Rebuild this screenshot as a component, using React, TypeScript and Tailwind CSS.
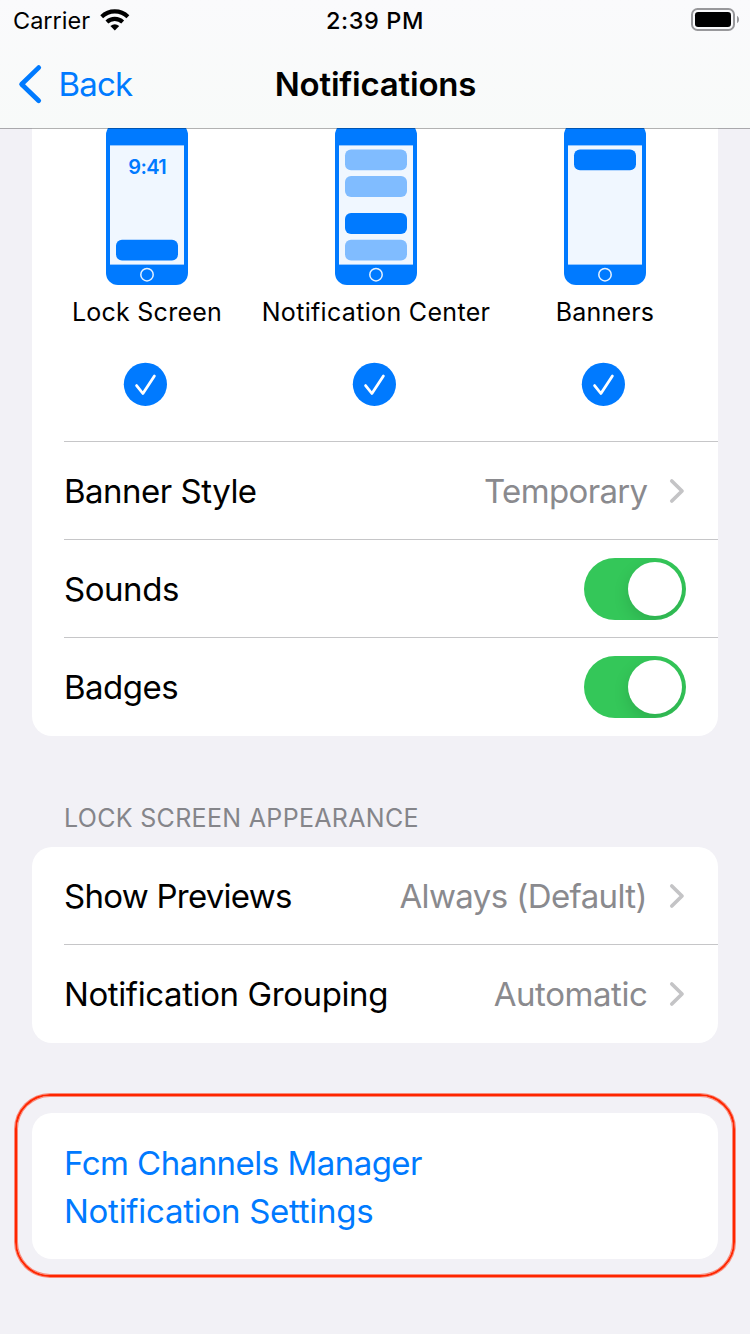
import type { ReactNode } from 'react';

type Bar = { y: number; soft?: boolean };

function WifiIcon() {
  return (
    <svg width="30" height="23" viewBox="0 0 30 23" fill="none" stroke="#000" strokeWidth="4.1">
      <path d="M1.7 8.7A18.9 18.9 0 0 1 27.9 8.7" />
      <path d="M6.9 14A11.5 11.5 0 0 1 22.7 14" />
      <path d="M10.4 18Q14.8 14.6 19.2 18L14.8 22.5Z" fill="#000" stroke="none" />
    </svg>
  );
}

function BatteryIcon() {
  return (
    <svg width="48" height="23" viewBox="0 0 48 23">
      <rect x="1" y="1" width="42" height="21" rx="5.6" fill="none" stroke="#98989b" strokeWidth="2" />
      <rect x="4" y="4" width="36" height="15" rx="3.2" fill="#000" />
      <path d="M46 7.8C47.3 8.5 48 9.9 48 11.5S47.3 14.5 46 15.2Z" fill="#98989b" />
    </svg>
  );
}

function Phone({ bars, clock }: { bars: Bar[]; clock?: boolean }) {
  return (
    <svg width="82" height="162" viewBox="0 0 82 162">
      <rect width="82" height="162" rx="12" fill="#007aff" />
      <rect x="4" y="22.4" width="74" height="119.2" fill="#f0f7ff" />
      {clock && (
        <text x="22.2" y="51.2" fill="#007aff" className="font-['Inter',sans-serif] text-[20px] font-semibold tracking-[-0.6px]">
          9:41
        </text>
      )}
      {bars.map((b) => (
        <rect key={b.y} x="10" y={b.y} width="62" height="20.8" rx="6" fill={b.soft ? '#80bcff' : '#007aff'} />
      ))}
      <circle cx="41" cy="151.7" r="6.2" fill="none" stroke="#e6f2ff" strokeWidth="1.5" />
    </svg>
  );
}

function CheckCircle() {
  return (
    <svg width="44" height="44" viewBox="-0.4 0 44 44" className="mr-[4px]">
      <circle cx="22" cy="22.3" r="21.6" fill="#007aff" />
      <path d="M13.2 23.6L19.5 31.5L31 14.1" fill="none" stroke="#fff" strokeWidth="2.8" strokeLinecap="round" strokeLinejoin="round" />
    </svg>
  );
}

function AlertOption({ label, labelClass, children }: { label: string; labelClass: string; children: ReactNode }) {
  return (
    <div className="flex flex-col items-center">
      {children}
      <span className={`mt-[11px] h-8 whitespace-nowrap text-[25px] leading-8 ${labelClass}`}>{label}</span>
      <div className="mt-[34px]">
        <CheckCircle />
      </div>
    </div>
  );
}

function Chevron() {
  return (
    <svg width="16" height="26" viewBox="0 0 16 26" fill="none" stroke="#c4c4c6" strokeWidth="3.7" strokeLinecap="round" strokeLinejoin="round" className="mr-px ml-[21.5px]">
      <path d="M2.8 3L13 13L2.8 23" />
    </svg>
  );
}

function Toggle() {
  return (
    <span className="flex h-[62px] w-[102px] justify-end overflow-hidden rounded-full bg-[#34c759] p-1">
      <span className="size-[54px] rounded-full bg-white shadow-[0_6px_16px_rgba(0,0,0,0.13)]" />
    </span>
  );
}

function Row({ label, labelClass, rowClass, children }: { label: string; labelClass: string; rowClass: string; children: ReactNode }) {
  return (
    <div className={`ml-8 flex items-center pr-8 ${rowClass}`}>
      <span className={`text-[33px] leading-[48px] ${labelClass}`}>{label}</span>
      <span className="ml-auto flex items-center">{children}</span>
    </div>
  );
}

function Value({ text, className }: { text: string; className: string }) {
  return (
    <>
      <span className={`text-[33px] leading-[48px] text-[#8a8a8e] ${className}`}>{text}</span>
      <Chevron />
    </>
  );
}

export default function App() {
  return (
    <div className="h-[1334px] w-[750px] overflow-hidden bg-[#f2f1f6] font-['Inter',sans-serif] text-black">
      <header className="relative z-10 flex h-32 flex-col bg-linear-to-b from-[#fafafc] to-[#f8faf9] shadow-[0_1px_0_rgba(0,0,0,0.3)]">
        <div className="grid h-10 grid-cols-3 items-start px-[13px]">
          <div className="flex items-start">
            <span className="pt-px text-[23.5px] leading-10">Carrier</span>
            <span className="mt-2 ml-[9.5px]">
              <WifiIcon />
            </span>
          </div>
          <span className="pt-px text-center text-[23.5px] leading-10 font-medium tracking-[0.6px]">2:39 PM</span>
          <div className="-mr-[2px] mt-2 flex justify-end">
            <BatteryIcon />
          </div>
        </div>
        <div className="grid h-[88px] grid-cols-3 items-center pl-4">
          <div className="flex items-center text-[#007aff]">
            <svg width="28" height="42" viewBox="0 0 28 42" fill="none" stroke="currentColor" strokeWidth="4.8" strokeLinecap="round" strokeLinejoin="round">
              <path d="M22.7 4.6L5.6 21.2L22.7 37.7" />
            </svg>
            <span className="ml-[14.5px] text-[33px] leading-[48px] tracking-[-0.8px]">Back</span>
          </div>
          <h1 className="-ml-[15px] text-center text-[33px] leading-[48px] font-semibold tracking-[-0.22px]">Notifications</h1>
        </div>
      </header>

      <main className="flex flex-col px-8">
        <section className="-mt-[5px] rounded-b-[20px] bg-white">
          <div className="ml-[0.5px] grid h-[318px] w-[687px] grid-cols-3">
            <AlertOption label="Lock Screen" labelClass="tracking-[0.25px]">
              <Phone clock bars={[{ y: 116.8 }]} />
            </AlertOption>
            <AlertOption label="Notification Center" labelClass="tracking-[0.32px]">
              <Phone bars={[{ y: 26.4, soft: true }, { y: 53.1, soft: true }, { y: 90.1 }, { y: 116.8, soft: true }]} />
            </AlertOption>
            <AlertOption label="Banners" labelClass="tracking-[0.2px]">
              <Phone bars={[{ y: 26.4 }]} />
            </AlertOption>
          </div>
          <Row label="Banner Style" labelClass="tracking-[-0.5px]" rowClass="h-[98px] border-t border-[#c6c6c8] pt-px">
            <Value text="Temporary" className="tracking-[-0.65px]" />
          </Row>
          <Row label="Sounds" labelClass="tracking-[-0.45px]" rowClass="h-[98px] border-t border-[#c6c6c8] pt-px">
            <Toggle />
          </Row>
          <Row label="Badges" labelClass="tracking-[-0.5px]" rowClass="h-[99px] border-t border-[#c6c6c8]">
            <Toggle />
          </Row>
        </section>

        <h2 className="mt-[66px] ml-8 h-8 text-[25px] leading-8 tracking-[0.32px] text-[#85858a]">LOCK SCREEN APPEARANCE</h2>

        <section className="mt-[13px] rounded-[20px] bg-white">
          <Row label="Show Previews" labelClass="tracking-[-0.74px]" rowClass="h-[97px] pt-px">
            <Value text="Always (Default)" className="mr-[0.5px] tracking-[-0.6px]" />
          </Row>
          <Row label="Notification Grouping" labelClass="tracking-[-0.4px]" rowClass="h-[99px] border-t border-[#c6c6c8]">
            <Value text="Automatic" className="tracking-[-0.42px]" />
          </Row>
        </section>

        <section className="relative mt-[70px] h-[146px] rounded-[20px] bg-white px-8 pt-[26px] text-[33px] leading-[48px] text-[#007aff]">
          <p className="tracking-[-0.53px]">Fcm Channels Manager</p>
          <p className="tracking-[-0.27px]">Notification Settings</p>
          <div className="pointer-events-none absolute -top-[19px] -right-[17px] -bottom-[18px] -left-[17px] rounded-[35px] border-2 border-[#ff2600] shadow-[0_0_0_1px_rgba(255,38,0,0.5),inset_0_0_0_1px_rgba(255,38,0,0.5)]" />
        </section>
      </main>
    </div>
  );
}
